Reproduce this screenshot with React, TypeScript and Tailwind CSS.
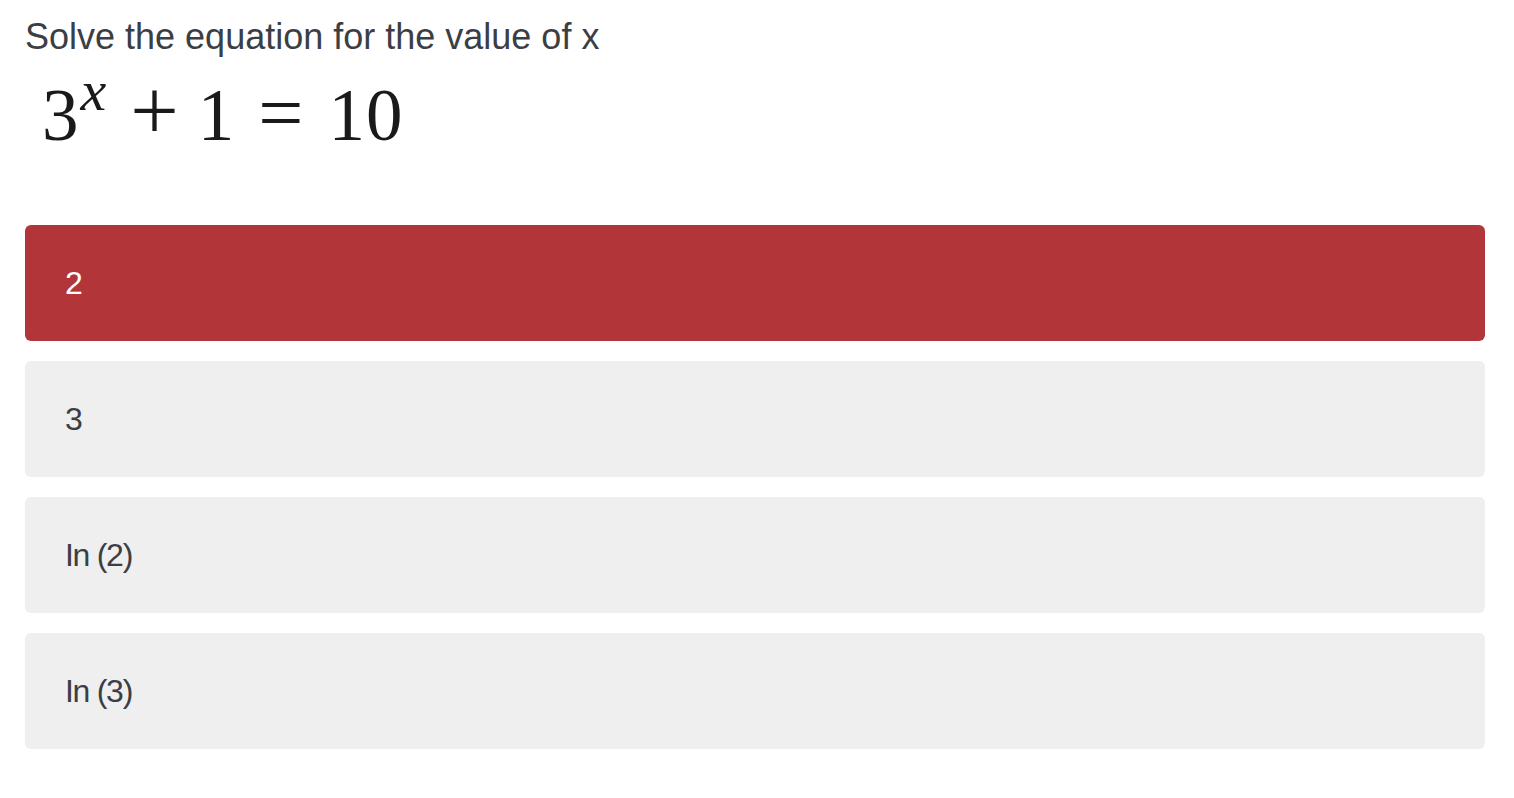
const options = [
  { label: '2', selected: true },
  { label: '3', selected: false },
  { label: 'In (2)', selected: false },
  { label: 'In (3)', selected: false },
];

export default function App() {
  return (
    <div className="min-h-screen bg-white px-[25px] pt-[16px] font-['Liberation_Sans',Arial,sans-serif]">
      <h1 className="text-[36px] leading-[41px] text-[#3b3e44]">Solve the equation for the value of x</h1>

      {/* equation rendered as text, spaced like the typeset original */}
      <div className="mt-[5px] ml-[17px] h-[76px] whitespace-nowrap font-['Liberation_Serif','Times_New_Roman',serif] text-[73px] leading-none text-[#1a1a1a]">
        <span>3</span>
        <span className="ml-[2px] text-[58px] italic [vertical-align:30px]">x</span>
        <span className="ml-[24px] text-[86px]">+</span>
        <span className="ml-[19px]">1</span>
        <span className="ml-[24px] text-[80px]">=</span>
        <span className="ml-[25px] tracking-[1px]">10</span>
      </div>

      <div className="mt-[87px] flex flex-col gap-[20px] pr-[4px]">
        {options.map((o) => (
          <div
            key={o.label}
            className={
              o.selected
                ? 'flex h-[116px] items-center rounded-md bg-[#b2353a] px-[40px] text-[32px] tracking-[-0.04em] text-white'
                : 'flex h-[116px] items-center rounded-md bg-[#efefef] px-[40px] text-[32px] tracking-[-0.04em] text-[#3b3e44]'
            }
          >
            {o.label}
          </div>
        ))}
      </div>
    </div>
  );
}
